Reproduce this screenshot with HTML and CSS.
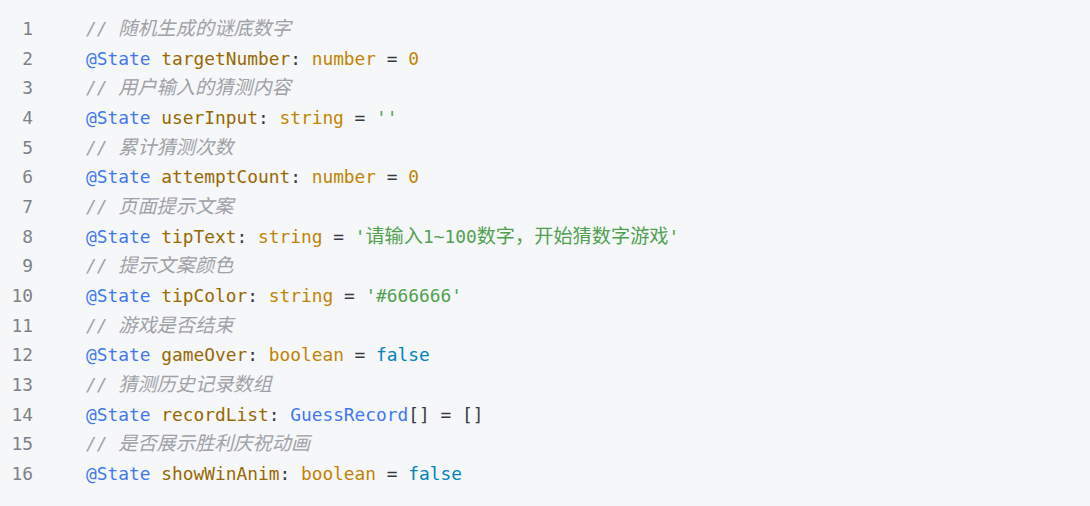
FILE: index.html
```html
<!DOCTYPE html>
<html lang="zh">
<head>
<meta charset="utf-8">
<link rel="stylesheet" href="styles.css">
</head>
<body>
<div class="code">
<div class="gutter"><span>1</span><span>2</span><span>3</span><span>4</span><span>5</span><span>6</span><span>7</span><span>8</span><span>9</span><span>10</span><span>11</span><span>12</span><span>13</span><span>14</span><span>15</span><span>16</span></div>
<pre class="lines"><span class="c">// <span class="z">随机生成的谜底数字</span></span>
<span class="d">@State</span> <span class="p">targetNumber</span>: <span class="t">number</span> = <span class="t">0</span>
<span class="c">// <span class="z">用户输入的猜测内容</span></span>
<span class="d">@State</span> <span class="p">userInput</span>: <span class="t">string</span> = <span class="s">''</span>
<span class="c">// <span class="z">累计猜测次数</span></span>
<span class="d">@State</span> <span class="p">attemptCount</span>: <span class="t">number</span> = <span class="t">0</span>
<span class="c">// <span class="z">页面提示文案</span></span>
<span class="d">@State</span> <span class="p">tipText</span>: <span class="t">string</span> = <span class="s">'<span class="z">请输入</span>1~100<span class="z">数字，开始猜数字游戏</span>'</span>
<span class="c">// <span class="z">提示文案颜色</span></span>
<span class="d">@State</span> <span class="p">tipColor</span>: <span class="t">string</span> = <span class="s">'#666666'</span>
<span class="c">// <span class="z">游戏是否结束</span></span>
<span class="d">@State</span> <span class="p">gameOver</span>: <span class="t">boolean</span> = <span class="k">false</span>
<span class="c">// <span class="z">猜测历史记录数组</span></span>
<span class="d">@State</span> <span class="p">recordList</span>: <span class="d">GuessRecord</span>[] = []
<span class="c">// <span class="z">是否展示胜利庆祝动画</span></span>
<span class="d">@State</span> <span class="p">showWinAnim</span>: <span class="t">boolean</span> = <span class="k">false</span></pre>
</div>
</body>
</html>
```
FILE: styles.css
```css
html, body {
  margin: 0;
  padding: 0;
  background: #f6f7f9;
}
.code {
  display: flex;
  gap: 53px;
  padding-top: 14px;
  font-family: "DejaVu Sans Mono", "Noto Sans CJK SC", monospace;
  font-size: 17.85px;
  line-height: 29.67px;
  color: #383a42;
}
.gutter {
  display: flex;
  flex-direction: column;
  align-items: flex-end;
  width: 33px;
  color: #7d8188;
}
.lines {
  margin: 0;
  font: inherit;
  white-space: pre;
}
.z {
  font-size: 19.2px;
  line-height: 1;
}
.c { color: #a0a1a7; font-style: italic; }
.d { color: #4078f2; }
.p { color: #986801; }
.t { color: #c18401; }
.s { color: #50a14f; }
.k { color: #0184bc; }
```
